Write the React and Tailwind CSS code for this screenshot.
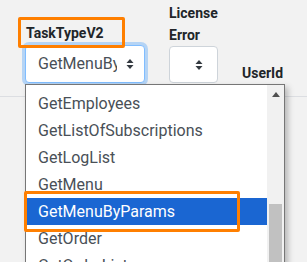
import React from "react";

function Updown() {
  return (
    <svg width="8" height="12" viewBox="0 0 8 12" className="shrink-0">
      <path d="M4 1 L7.5 5 L0.5 5 Z" fill="#343a40" />
      <path d="M4 11 L7.5 7 L0.5 7 Z" fill="#343a40" />
    </svg>
  );
}

const items = [
  "GetEmployees",
  "GetListOfSubscriptions",
  "GetLogList",
  "GetMenu",
  "GetMenuByParams",
  "GetOrder",
  "GetOrderList",
];

export default function App() {
  return (
    <div
      className="relative w-[307px] h-[262px] overflow-hidden bg-[#f2f2f2]"
      style={{ fontFamily: "Roboto, 'Liberation Sans', sans-serif" }}
    >
      {/* Header */}
      <div className="flex items-end gap-6 pl-[25px] h-[97px] pb-[13px] border-b border-[#dcdee2]">
        <div className="flex flex-col w-[120px]">
          <span className="text-[14px] font-bold leading-[22px] text-[#212529] pl-px">TaskTypeV2</span>
          <div className="mt-px h-[38px] flex items-center rounded-[4px] bg-white border border-[#80bdff] shadow-[0_0_0_3px_rgba(0,123,255,0.25)] pl-[12px] pr-[10px]">
            <span className="flex-1 overflow-hidden whitespace-nowrap text-[16px] text-[#495057]">GetMenuByParams</span>
            <span className="ml-[9px]"><Updown /></span>
          </div>
        </div>
        <div className="flex flex-col w-[49px]">
          <span className="text-[14px] font-bold leading-[22px] text-[#212529]">License</span>
          <span className="text-[14px] font-bold leading-[22px] text-[#212529]">Error</span>
          <div className="h-[37px] flex items-center justify-end rounded-[4px] bg-white border border-[#ced4da] pr-[14px]">
            <Updown />
          </div>
        </div>
        <span className="text-[14px] font-bold leading-[22px] text-[#212529] -mb-px">UserId</span>
      </div>

      {/* Native select popup */}
      <div className="absolute left-[25px] top-[84px] w-[260px] h-[200px] bg-white border border-[#767676] shadow-[3px_3px_6px_rgba(0,0,0,0.25)] flex">
        <div className="flex-1 pt-[5px]">
          {items.map((it) => (
            <div
              key={it}
              className={
                it === "GetMenuByParams"
                  ? "h-[27px] flex items-center pl-[12px] text-[16px] bg-[#1a66d2] text-white"
                  : "h-[27px] flex items-center pl-[12px] text-[16px] text-[#495057]"
              }
            >
              {it}
            </div>
          ))}
        </div>
        <div className="w-[17px] bg-[#f1f1f1] flex flex-col items-center">
          <svg width="8" height="5" viewBox="0 0 8 5" className="mt-[7px]">
            <path d="M4 0 L8 5 L0 5 Z" fill="#505050" />
          </svg>
          <div className="mt-[107px] w-[13px] h-[80px] bg-[#c1c1c1]" />
        </div>
      </div>

      {/* Annotation boxes */}
      <div className="absolute left-[18px] top-[17px] w-[107px] h-[31px] border-[3px] border-[#ff7f00] rounded-[2px]" />
      <div className="absolute left-[24px] top-[191px] w-[216px] h-[41px] border-[3px] border-[#ff7f00] rounded-[2px]" />
    </div>
  );
}
